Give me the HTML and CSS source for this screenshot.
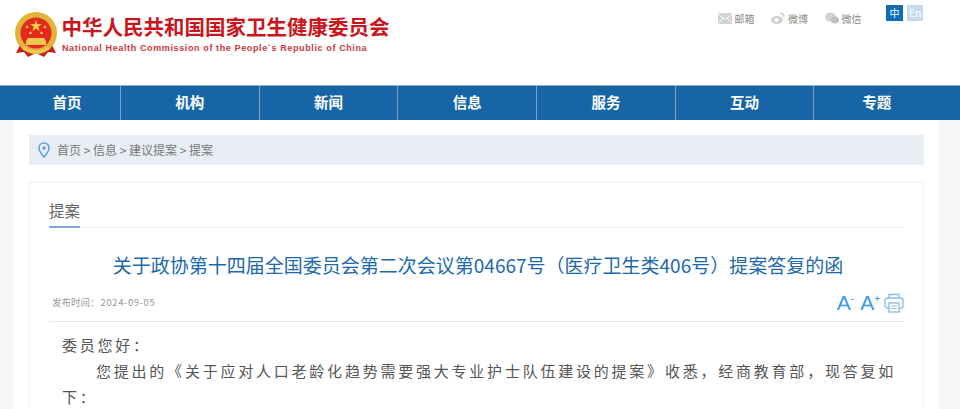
FILE: index.html
```html
<!DOCTYPE html>
<html lang="zh-CN">

<head>
    <meta charset="utf-8" />
    <title>提案</title>
    <link rel="stylesheet" href="styles.css">
</head>

<body>
    <header class="top">
        <div class="logo">
            <svg class="emblem" width="44" height="46" viewBox="0 0 44 46">
                <path d="M6 33 L2 41 L10 40 L14 45 L22 41 L30 45 L34 40 L42 41 L38 33 Z" fill="#c8201c" />
                <circle cx="22" cy="21" r="21" fill="#e3b23a" />
                <circle cx="22" cy="21" r="15.5" fill="#e22a1e" />
                <polygon points="22,8 23.4,12.2 27.8,12.2 24.2,14.8 25.6,19 22,16.4 18.4,19 19.800,14.800 16.200,12.200 20.600,12.200" fill="#f6d34a" />
                <circle cx="13" cy="15" r="1.300" fill="#f6d34a" />
                <circle cx="31" cy="15" r="1.300" fill="#f6d34a" />
                <circle cx="16.500" cy="21" r="1.200" fill="#f6d34a" />
                <circle cx="27.500" cy="21" r="1.200" fill="#f6d34a" />
                <path d="M14 26 L30 26 L32 29 L32 33 L12 33 L12 29 Z" fill="#f0c850" />
                <path d="M9 36 Q22 44 35 36" fill="none" stroke="#f0c850" stroke-width="3" />
            </svg>
            <div class="logo-text">
                <div class="logo-cn">中华人民共和国国家卫生健康委员会</div>
                <div class="logo-en">National Health Commission of the People´s Republic of China</div>
            </div>
        </div>
        <div class="tools">
            <span class="tool">
                <svg width="14" height="11" viewBox="0 0 14 11">
                    <rect width="14" height="11" fill="#d2d2d2" />
                    <path d="M0 1 L7 6.500 L14 1 M0 10.500 L5 5 M14 10.500 L9 5" fill="none" stroke="#fff" stroke-width="1" />
                </svg>
                邮箱
            </span>
            <span class="tool">
                <svg width="14" height="12" viewBox="0 0 14 12">
                    <ellipse cx="6" cy="8" rx="6" ry="4" fill="#cfcfcf" />
                    <circle cx="5.500" cy="8" r="2" fill="#fff" />
                    <path d="M9 1.500 Q13 1 13 5" fill="none" stroke="#cfcfcf" stroke-width="1.500" />
                </svg>
                微博
            </span>
            <span class="tool">
                <svg width="14" height="12" viewBox="0 0 14 12">
                    <ellipse cx="5.500" cy="5" rx="5.500" ry="4.500" fill="#d2d2d2" />
                    <ellipse cx="10" cy="8" rx="4" ry="3.500" fill="#bdbdbd" />
                </svg>
                微信
            </span>
            <div class="lang">
                <span class="lang-cn">中</span>
                <span class="lang-en">En</span>
            </div>
        </div>
    </header>

    <nav class="nav">
        <a href="#">首页</a>
        <a href="#">机构</a>
        <a href="#">新闻</a>
        <a href="#">信息</a>
        <a href="#">服务</a>
        <a href="#">互动</a>
        <a href="#">专题</a>
    </nav>

    <main class="wrap">
        <div class="crumbs">
            <svg width="12" height="16" viewBox="0 0 12 16">
                <path d="M6 1 C3 1 1 3.200 1 6 C1 9.500 6 15 6 15 C6 15 11 9.500 11 6 C11 3.200 9 1 6 1 Z" fill="none" stroke="#5aa5e4" stroke-width="1.600" />
                <circle cx="6" cy="6" r="1.800" fill="#5aa5e4" />
            </svg>
            <span>首页 &gt; 信息 &gt; 建议提案 &gt; 提案</span>
        </div>

        <section class="card">
            <div class="section-head"><span>提案</span></div>
            <h1 class="title">关于政协第十四届全国委员会第二次会议第04667号&#xFF08;医疗卫生类406号&#xFF09;提案答复的函</h1>
            <div class="meta">
                <div class="date">发布时间&#xFF1A;<span class="date-val">2024-09-05</span></div>
                <div class="meta-tools">
                    <span class="font-btn">A<sup>-</sup></span>
                    <span class="font-btn">A<sup>+</sup></span>
                    <svg class="print" width="20" height="20" viewBox="0 0 20 20" fill="none" stroke="#8dbfe6" stroke-width="1.400">
                        <path d="M5 5 V1.500 H15 V5" />
                        <rect x="1" y="5" width="18" height="10" rx="2.500" />
                        <rect x="5" y="10" width="10" height="9" fill="#fff" />
                        <path d="M7 13 H13 M7 15.500 H13" stroke-width="1" />
                    </svg>
                </div>
            </div>
            <div class="body-text">
                <p>委员您好&#xFF1A;</p>
                <p class="indent">您提出的《关于应对人口老龄化趋势需要强大专业护士队伍建设的提案》收悉&#xFF0C;经商教育部&#xFF0C;现答复如下&#xFF1A;</p>
            </div>
        </section>
    </main>
</body>

</html>
```

FILE: styles.css
```css
* {
    box-sizing: border-box;
    font-family: "Noto Sans CJK SC", "Liberation Sans", sans-serif;
}

body {
    margin: 0;
    background: #f6f6f6;
}

.top {
    height: 85px;
    background: #fff;
    display: flex;
    justify-content: space-between;
    padding: 11px 37px 0 14px;
}

.logo {
    display: flex;
    gap: 4px;
    align-items: flex-start;
}

.emblem {
    margin-top: 1px;
}

.logo-cn {
    font-size: 20.500px;
    font-weight: bold;
    line-height: 30px;
    color: #c9161c;
    margin-left: -0.500px;
}

.logo-en {
    font-family: "Liberation Sans", sans-serif;
    font-size: 9px;
    font-weight: bold;
    line-height: 14px;
    letter-spacing: 0.620px;
    color: #c9373c;
}

.tools {
    display: flex;
    align-items: flex-start;
    font-size: 10px;
    color: #8a8a8a;
}

.tool {
    display: flex;
    align-items: center;
    gap: 3px;
    height: 18px;
    margin-top: -2px;
    margin-right: 16.500px;
}

.lang {
    display: flex;
    gap: 4px;
    margin-left: 8px;
    margin-top: -6px;
}

.lang span {
    width: 17px;
    height: 16px;
    line-height: 16px;
    text-align: center;
    color: #fff;
}

.lang .lang-en {
    width: 16px;
}

.lang-cn {
    background: #0f6cb6;
}

.lang-en {
    background: #c5dcee;
}

.nav {
    display: flex;
    height: 35px;
    padding: 0 21px 0 14px;
    background: #1765a5;
    border-top: 1px solid #8fb0cc;
}

.nav a {
    width: 138.700px;
    line-height: 32px;
    text-align: center;
    font-size: 14.500px;
    font-weight: bold;
    color: #fff;
    text-decoration: none;
    border-right: 1px solid #7ba3c8;
}

.nav a:first-child {
    width: 107px;
}

.nav a:last-child {
    flex: 1;
    border-right: 0;
}

.wrap {
    margin: 0 21px 0 14px;
    height: 289px;
    overflow: hidden;
    padding: 15px 15px 0;
    background: #fff;
}

.crumbs {
    display: flex;
    align-items: center;
    gap: 7px;
    height: 30px;
    padding: 0 0 1px 9px;
    background: #e9eef5;
    font-size: 12px;
    color: #777;
}

.crumbs svg {
    margin-top: 1px;
}

.card {
    margin-top: 16px;
    height: 240px;
    padding: 15px 19px 0;
    border: 1px solid #f1f1f1;
}

.section-head {
    height: 31px;
    border-bottom: 1px solid #e9edf2;
}

.section-head span {
    display: inline-block;
    height: 31px;
    font-size: 15.500px;
    line-height: 26px;
    color: #666;
    border-bottom: 2px solid #7fa6d4;
}

.title {
    margin: 22px 0 0;
    padding-left: 3px;
    font-size: 19px;
    font-weight: normal;
    line-height: 30px;
    text-align: center;
    color: #1c69ac;
}

.meta {
    display: flex;
    justify-content: space-between;
    align-items: flex-end;
    height: 42px;
    padding: 0 0 8px 3px;
    border-bottom: 1px solid #e8e8e8;
}

.date {
    font-size: 9.500px;
    color: #999;
    padding-bottom: 4px;
}

.date-val {
    margin-left: 1px;
    letter-spacing: 0.600px;
}

.meta-tools {
    display: flex;
    align-items: center;
    gap: 6px;
}

.print {
    margin-left: -2px;
}

.font-btn {
    font-family: "Liberation Sans", sans-serif;
    font-size: 21px;
    line-height: 20px;
    color: #3a9ade;
}

.font-btn sup {
    font-family: "Liberation Sans", sans-serif;
    font-size: 10px;
    line-height: 0;
}

.body-text {
    padding: 10px 8px 0 13px;
    font-size: 15px;
    line-height: 26px;
    letter-spacing: 2.750px;
    color: #555;
    text-align: justify;
}

.body-text p {
    margin: 0;
}

.indent {
    text-indent: 34px;
}
```
